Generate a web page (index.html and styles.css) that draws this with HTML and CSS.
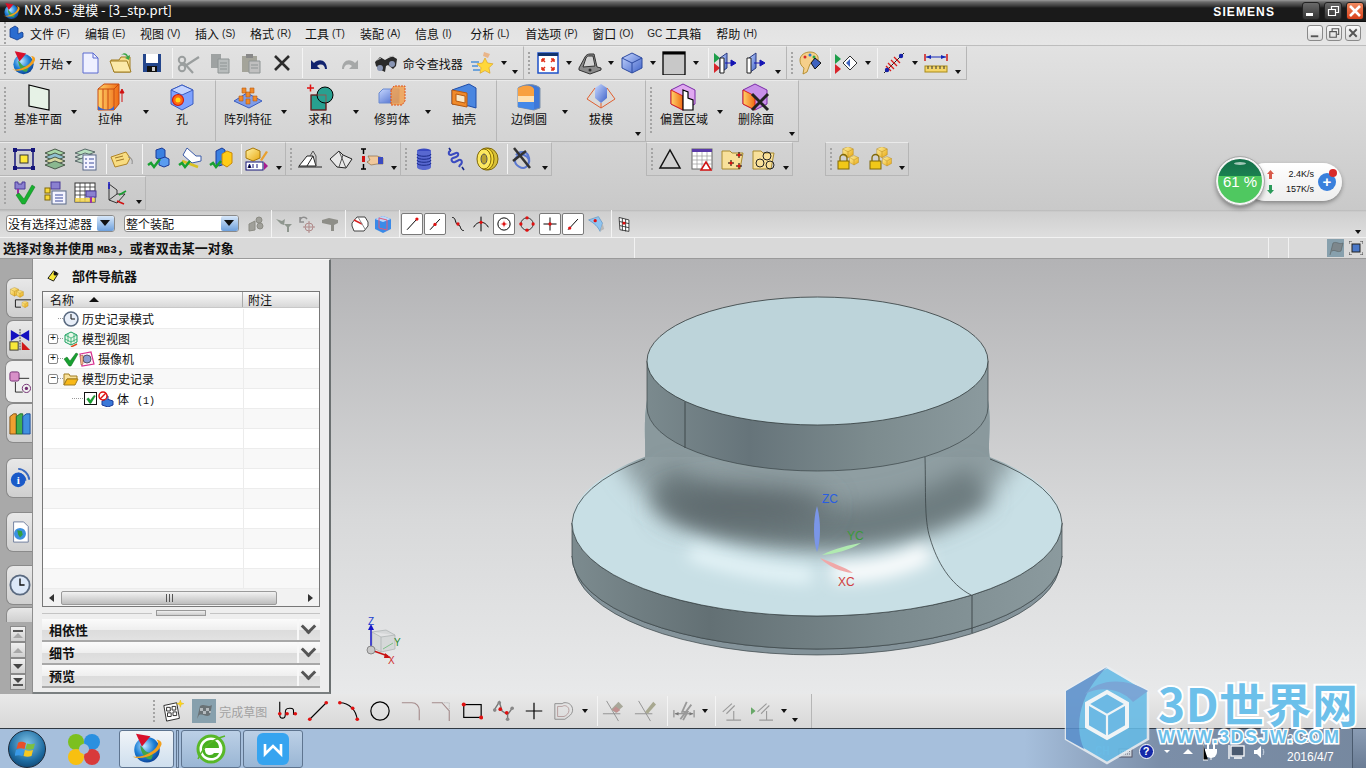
FILE: index.html
```html
<!DOCTYPE html>
<html lang="zh-CN">
<head>
<meta charset="utf-8">
<title>NX 8.5 - 建模 - [3_stp.prt]</title>
<link rel="stylesheet" href="styles.css">
</head>
<body>
<svg class="defs" width="0" height="0" aria-hidden="true">
  <defs>
    <radialGradient id="gGlobe" cx=".4" cy=".35" r=".7"><stop offset="0" stop-color="#bfe6ff"/><stop offset=".55" stop-color="#1c7fd6"/><stop offset="1" stop-color="#0b3f92"/></radialGradient>
    <linearGradient id="gBlue" x1="0" y1="0" x2="1" y2="1"><stop offset="0" stop-color="#c8d8ff"/><stop offset="1" stop-color="#3f62c8"/></linearGradient>
    <linearGradient id="gGold" x1="0" y1="0" x2="1" y2="1"><stop offset="0" stop-color="#fff3a8"/><stop offset="1" stop-color="#e8a810"/></linearGradient>
    <linearGradient id="gOrange" x1="0" y1="0" x2="1" y2="0"><stop offset="0" stop-color="#ffd36a"/><stop offset="1" stop-color="#ef6a14"/></linearGradient>
    <linearGradient id="gBand" x1="0" y1="0" x2="1" y2="0"><stop offset="0" stop-color="#7b8a8e"/><stop offset=".3" stop-color="#66747a"/><stop offset=".65" stop-color="#7c8b8e"/><stop offset="1" stop-color="#8b9a9e"/></linearGradient>
    <linearGradient id="gBase" x1="0" y1="0" x2="1" y2="0"><stop offset="0" stop-color="#7c8b8f"/><stop offset=".28" stop-color="#637074"/><stop offset=".65" stop-color="#7b8a8e"/><stop offset="1" stop-color="#8b9a9e"/></linearGradient>
    <symbol id="nx" viewBox="0 0 40 40"><circle cx="20" cy="21" r="15" fill="url(#gGlobe)"/><path d="M12 16c4 2 5 8 10 8s6 3 3 8c-6 2-12-6-13-16z" fill="#3fa34d"/><path d="M3 29c10 5 30-2 34-14 1-4-3-6-6-6 4 3 2 8-4 13-8 6-17 8-24 7z" fill="#f2a01e"/><path d="M7 2l17 3-10 12z" fill="#d8102a"/></symbol>
    <symbol id="chk" viewBox="0 0 16 16"><path d="M1 8l3-2 3 4 6-8 2 1-7 12h-2z" fill="#18a030" stroke="#0a6a1a" stroke-width=".5"/></symbol>
    <symbol id="cube" viewBox="0 0 24 24"><path d="M12 2l10 5v10l-10 5-10-5V7z" fill="url(#gBlue)" stroke="#2d4aa0"/><path d="M2 7l10 5 10-5M12 12v10" fill="none" stroke="#2d4aa0"/></symbol>
    <symbol id="cubo" viewBox="0 0 24 24"><path d="M12 1l9 4v10l-9 5-9-5V5z" fill="url(#gGold)" stroke="#a87808" stroke-width=".7"/><path d="M3 5l9 5 9-5M12 10v10" fill="none" stroke="#a87808" stroke-width=".7"/></symbol>
    <symbol id="linept" viewBox="0 0 22 22"><path d="M5 18L17 5" stroke="#000" stroke-width="1.200"/></symbol>
  </defs>
</svg>

<div class="app">
  <header class="titlebar">
    <svg class="tlogo"><use href="#nx"/></svg>
    <span class="ttext">NX 8.5 - 建模 - [3_stp.prt]</span>
    <span class="siemens">SIEMENS</span>
    <div class="wbtns">
      <span class="wb"><svg width="18" height="18" viewBox="0 0 18 18"><rect x="4" y="11" width="7" height="3" fill="#fff"/></svg></span>
      <span class="wb"><svg width="18" height="18" viewBox="0 0 18 18"><path d="M4.500 7.500h7v6h-7zM7.500 7V4.500h7v6H12" fill="none" stroke="#fff" stroke-width="1.200"/></svg></span>
      <span class="wb wclose"><svg width="18" height="18" viewBox="0 0 18 18"><path d="M4 4l10 10M14 4L4 14" stroke="#fff" stroke-width="2.600"/></svg></span>
    </div>
  </header>

  <nav class="menubar">
    <i class="grip"></i>
    <svg class="mlogo" viewBox="0 0 16 16"><path d="M2 4l5-3 3 2v6l4-2 1 1v4l-6 3-2-1-5-2z" fill="#2a6cd0" stroke="#123a8a" stroke-width=".8"/></svg>
    <span class="m">文件<b>(F)</b></span><span class="m">编辑<b>(E)</b></span><span class="m">视图<b>(V)</b></span><span class="m">插入<b>(S)</b></span><span class="m">格式<b>(R)</b></span><span class="m">工具<b>(T)</b></span><span class="m">装配<b>(A)</b></span><span class="m">信息<b>(I)</b></span><span class="m">分析<b>(L)</b></span><span class="m">首选项<b>(P)</b></span><span class="m">窗口<b>(O)</b></span><span class="m"><b class="gc">GC</b>工具箱</span><span class="m">帮助<b>(H)</b></span>
    <div class="mdi">
      <span class="mb"><svg width="15" height="15" viewBox="0 0 15 15"><rect x="3" y="10" width="8" height="2" fill="#555"/></svg></span>
      <span class="mb"><svg width="15" height="15" viewBox="0 0 15 15"><path d="M3 6h7v6H3zM5.500 5.500V3h7v6H11" fill="none" stroke="#555" stroke-width="1.200"/></svg></span>
      <span class="mb"><svg width="15" height="15" viewBox="0 0 15 15"><path d="M3.500 3.500l8 8M11.500 3.500l-8 8" stroke="#555" stroke-width="2"/></svg></span>
    </div>
  </nav>

  <section class="tools">
    <div class="row">
      <div class="g pr">
        <i class="grip"></i>
        <span class="b"><svg class="ic ic28"><use href="#nx"/></svg></span>
        <span class="lb lstart">开始<i class="c"></i></span>
        <span class="b"><svg class="ic" viewBox="0 0 24 24"><path d="M5 2h10l5 5v15H5z" fill="#eef0ff" stroke="#5a6ad0"/><path d="M15 2v5h5" fill="none" stroke="#5a6ad0"/></svg></span>
        <span class="b"><svg class="ic" viewBox="0 0 24 24"><path d="M2 9h8l2-3h9v15H5z" fill="#f7dc8a" stroke="#a07c20"/><path d="M5 21L1 10h17l4 11z" fill="#fbe9a8" stroke="#a07c20"/><path d="M12 4c3-3 6-2 7 1l2-1-1 5-4-2 2-1c-1-2-3-3-6-2z" fill="#3aa648"/></svg></span>
        <span class="b"><svg class="ic" viewBox="0 0 24 24"><path d="M3 3h18v18H3z" fill="#24468c"/><rect x="6" y="3" width="12" height="9" fill="#fff"/><rect x="7" y="15" width="10" height="6" fill="#111"/><rect x="12" y="16" width="3" height="4" fill="#ccc"/></svg></span>
        <i class="sep"></i>
        <span class="b"><svg class="ic" viewBox="0 0 24 24"><path d="M8 15L22 6M7 12l9 10" stroke="#9a9e9e" stroke-width="2.200" fill="none"/><circle cx="5" cy="9" r="3.200" fill="none" stroke="#9a9e9e" stroke-width="2"/><circle cx="5" cy="17" r="3.200" fill="none" stroke="#9a9e9e" stroke-width="2"/></svg></span>
        <span class="b"><svg class="ic" viewBox="0 0 24 24"><path d="M3 3h10v14H3z" fill="#9ea2a2"/><path d="M10 8h11v14H10z" fill="#b8bcbc" stroke="#8e9494"/><path d="M12 12h7M12 15h7M12 18h7" stroke="#8e9494"/></svg></span>
        <span class="b"><svg class="ic" viewBox="0 0 24 24"><path d="M3 5h15v16H3z" fill="#a4a49a"/><path d="M7 3h7v4H7z" fill="#888"/><path d="M10 10h11v12H10z" fill="#c0c0c0" stroke="#8e9494"/><path d="M12 14h7M12 17h7" stroke="#8e9494"/></svg></span>
        <span class="b"><svg class="ic" viewBox="0 0 24 24"><path d="M5 5l14 14M19 5L5 19" stroke="#2c2c2c" stroke-width="2.600"/></svg></span>
        <i class="sep"></i>
        <span class="b"><svg class="ic" viewBox="0 0 24 24"><path d="M20 18c0-9-8-11-13-6l-3-3v9h9l-3-3c4-3 8-1 8 3z" fill="#12246e"/></svg></span>
        <span class="b"><svg class="ic" viewBox="0 0 24 24"><path d="M4 18c0-9 8-11 13-6l3-3v9h-9l3-3c-4-3-8-1-8 3z" fill="#a6a8a8"/></svg></span>
        <i class="sep"></i>
        <span class="b"><svg class="ic" viewBox="0 0 24 24"><path d="M1 11L6 6l5 3 7-4 5 3-1 7-3 3-5-4-2 1-1 6-6-3-3-3z" fill="#2a2a2a"/><circle cx="6" cy="17" r="3" fill="#8a96b4"/><circle cx="18" cy="13" r="3" fill="#8a96b4"/><path d="M3 9l4-2M15 6l5-1" stroke="#bbb"/></svg></span>
        <span class="lb lfind">命令查找器</span>
        <span class="b"><svg class="ic" viewBox="0 0 24 24"><path d="M15 7l2.500 5 5.500.8-4 4 1 5.500-5-2.700-5 2.700 1-5.500-4-4 5.500-.8z" fill="#ffd83a" stroke="#d89a10" stroke-width=".6"/><path d="M1 11h8M2 15h6M3 19h7" stroke="#4a90d8" stroke-width="1.500"/><path d="M14 1l6 2-2 4-5-2z" fill="#e9b58a"/></svg></span>
        <i class="cb"><i class="c"></i></i>
        <i class="mini"><i class="c"></i></i>
      </div>
      <div class="g pr">
        <i class="grip"></i>
        <span class="b"><svg class="ic" viewBox="0 0 24 24"><rect x="2" y="2" width="20" height="20" fill="#fff" stroke="#1e50c8" stroke-width="1.500"/><rect x="2" y="2" width="20" height="3" fill="#12336e"/><path d="M6 8l3 3M18 8l-3 3M6 19l3-3M18 19l-3-3M6 8h3M6 8v3M18 8h-3M18 8v3M6 19h3M6 19v-3M18 19h-3M18 19v-3" stroke="#e0301a" stroke-width="1.500"/></svg></span>
        <i class="cb"><i class="c"></i></i>
        <span class="b"><svg class="ic" viewBox="0 0 24 24"><path d="M1 17L7 6c1-2 3-3 5-3h4l3 13 4 1v2l-11 4-11-4z" fill="#8a8a8a" stroke="#333"/><path d="M8 7c1-2 2-2 4-2h3l2 10-12 1z" fill="#d4d4d4" stroke="#333"/><circle cx="12" cy="19" r="1.500" fill="#333"/></svg></span>
        <i class="cb"><i class="c"></i></i>
        <span class="b"><svg class="ic" viewBox="0 0 24 24"><use href="#cube"/></svg></span>
        <i class="cb"><i class="c"></i></i>
        <span class="b"><svg class="ic" viewBox="0 0 24 24"><rect x="1" y="1" width="22" height="23" fill="#c8c8c8" stroke="#000" stroke-width="1.300"/><rect x="1" y="1" width="22" height="2.500" fill="#000"/></svg></span>
        <i class="cb"><i class="c"></i></i>
        <i class="sep sepw"></i>
        <span class="b"><svg class="ic" viewBox="0 0 24 24"><path d="M1 12l6 5-6 5z" fill="#d8242a"/><path d="M1 2l6 5-6 5z" fill="#1e9e4a"/><path d="M7 7l7-5v15l-7 5z" fill="url(#gBlue)" stroke="#2a3a80"/><path d="M7 7h4v15H7z" fill="#fff" stroke="#222"/><path d="M12 12h8M18 9l5 3-5 3z" stroke="#1414b4" fill="#1414b4"/></svg></span>
        <span class="b"><svg class="ic" viewBox="0 0 24 24"><path d="M5 7l7-5v15l-7 5z" fill="url(#gBlue)" stroke="#2a3a80"/><path d="M3 7h4v15H3z" fill="#fff" stroke="#222"/><path d="M10 12h8M16 9l5 3-5 3z" stroke="#1414b4" fill="#1414b4"/></svg></span>
        <i class="mini"><i class="c"></i></i>
      </div>
      <div class="g pr">
        <i class="grip"></i>
        <span class="b"><svg class="ic" viewBox="0 0 24 24"><path d="M2 9c0-5 5-8 10-8 6 0 9 4 8 8-2 3-6 2-8 4l-3 8-4 2 1-6C3 15 2 12 2 9z" fill="#f5cf8a" stroke="#a98018" stroke-width=".8"/><circle cx="7" cy="6" r="1.500" fill="#d82a2a"/><circle cx="12" cy="4" r="1.500" fill="#2a78d8"/><circle cx="16" cy="6" r="1.500" fill="#2aa848"/><path d="M13 12l4-5 6 5-6 6z" fill="#3e62c0" stroke="#111"/></svg></span>
        <i class="sep"></i>
        <span class="b"><svg class="ic" viewBox="0 0 24 24"><path d="M1 3l6 5-6 5z" fill="#1e9e4a"/><path d="M1 13l6 5-6 5z" fill="#d8242a"/><path d="M9 12l7-7 7 7-7 7z" fill="#fff" stroke="#333"/><path d="M12 12l4-4v8z" fill="#3e62c0"/></svg></span>
        <i class="cb"><i class="c"></i></i>
        <i class="sep"></i>
        <span class="b"><svg class="ic" viewBox="0 0 24 24"><path d="M2 22L22 2" stroke="#222"/><path d="M6 12l6 6M9 9l6 6M12 6l6 6M4 15l5 5" stroke="#d81a1a" stroke-width="1.300"/><circle cx="5" cy="19" r="2.200" fill="#1420a8"/><circle cx="19" cy="5" r="2.200" fill="#1420a8"/></svg></span>
        <i class="cb"><i class="c"></i></i>
        <span class="b"><svg class="ic" viewBox="0 0 24 24"><path d="M1 3v7M23 3v7" stroke="#d01818" stroke-width="1.500"/><path d="M2 6h20" stroke="#1428b8"/><path d="M2 6l5-2v4zM22 6l-5-2v4z" fill="#1428b8"/><rect x="1" y="15" width="22" height="6" fill="#f5d668" stroke="#a88a18"/><path d="M4 15v3M8 15v3M12 15v3M16 15v3M20 15v3" stroke="#333"/></svg></span>
        <i class="mini"><i class="c"></i></i>
      </div>
    </div>

    <div class="row rowbig">
      <div class="g gbig pb3">
        <i class="grip"></i>
        <span class="big"><svg class="ib" viewBox="0 0 30 30"><path d="M6 3l20 5v20L6 24z" fill="#e6f2e6" stroke="#000" stroke-width="1.200"/></svg><em>基准平面</em></span><i class="cc"><i class="c"></i></i>
        <span class="big"><svg class="ib" viewBox="0 0 30 30"><path d="M3 7l6-5h15v20l-5 6H3z" fill="url(#gOrange)" stroke="#c84a10"/><path d="M3 7h16v21M19 7l5-5M8 7v21M13 7v21" fill="none" stroke="#c84a10"/><path d="M3 24c6 5 12 5 16 0v4H3z" fill="#3c64c8"/><path d="M27 20V8M25 11l2-4 2 4z" stroke="#d01010" fill="#d01010"/></svg><em>拉伸</em></span><i class="cc"><i class="c"></i></i>
        <span class="big"><svg class="ib" viewBox="0 0 30 30"><path d="M15 3l11 5v14l-11 6-11-6V8z" fill="#7ea2ff" stroke="#3a5cc0"/><path d="M4 8l11 5 11-5-11-5z" fill="#c4d4ff" stroke="#3a5cc0"/><circle cx="11" cy="18" r="5.500" fill="#ff6a10" stroke="#d01818" stroke-width="1.200"/><circle cx="11" cy="18" r="2.500" fill="#ffd818"/></svg><em>孔</em></span>
      </div>
      <div class="g gbig pb2">
        <i class="sep2"></i>
        <span class="big"><svg class="ib" viewBox="0 0 30 30"><path d="M1 19l13-8 15 8-13 7z" fill="#7e9ce8" stroke="#3a5cc0"/><path d="M6 14h4v5H6zM13 10h4v5h-4zM20 14h4v5h-4zM13 17h4v5h-4zM9 6h4v5H9zM17 6h4v5h-4z" fill="#f08a2a" stroke="#b85a10" stroke-width=".6"/></svg><em>阵列特征</em></span><i class="cc"><i class="c"></i></i>
        <span class="big"><svg class="ib" viewBox="0 0 30 30"><rect x="6" y="13" width="15" height="15" fill="#28a090" stroke="#000"/><circle cx="20" cy="13" r="8" fill="#28a090" stroke="#000"/><rect x="6" y="13" width="15" height="15" fill="none" stroke="#d02a2a" stroke-width=".6"/><path d="M2 6h7M5.500 2.500v7" stroke="#e01010" stroke-width="1.500"/></svg><em>求和</em></span><i class="cc"><i class="c"></i></i>
        <span class="big"><svg class="ib" viewBox="0 0 30 30"><path d="M2 11l4-4h16v14H2z" fill="url(#gBlue)" stroke="#6a8ad0"/><path d="M14 8l3-4h11v15l-3 4H14z" fill="#f0a050" fill-opacity=".85" stroke="#e05018" stroke-dasharray="2 1"/></svg><em>修剪体</em></span><i class="cc"><i class="c"></i></i>
        <span class="big"><svg class="ib" viewBox="0 0 30 30"><path d="M3 8l17-6 7 4v20l-7-2-17-2z" fill="#4a86e0" stroke="#1e4ca8"/><path d="M3 8l15 3v14L3 22z" fill="#f08a2a" stroke="#b85a10"/><path d="M7 12l9 2v7l-9-2z" fill="#f8e8c8" stroke="#b85a10"/></svg><em>抽壳</em></span>
      </div>
      <div class="g gbig">
        <i class="sep2"></i>
        <span class="big"><svg class="ib" viewBox="0 0 30 30"><path d="M4 6c8-5 18-4 22 0v20l-6 2-16-3z" fill="#3f78d8" stroke="#7c90a8"/><path d="M4 6c8-4 14-3 16 1v7H4z" fill="#f8a040"/><path d="M4 14h16v6H4z" fill="#ffe0b0"/><path d="M4 20h16v8L4 25z" fill="#4488e8"/></svg><em>边倒圆</em></span><i class="cc"><i class="c"></i></i>
        <span class="big"><svg class="ib" viewBox="0 0 30 30"><path d="M15 2l6 4v10l-6 5-6-5V6z" fill="url(#gBlue)"/><path d="M9 6l-8 11 14 9 14-9-8-11" fill="none" stroke="#e06030"/><path d="M15 26V21" stroke="#e06030"/></svg><em>拔模</em></span>
        <i class="mini minib"><i class="c"></i></i>
      </div>
      <div class="g gbig">
        <i class="grip"></i>
        <span class="big"><svg class="ib" viewBox="0 0 30 30"><path d="M14 2l12 6v14l-12 6-12-6V8z" fill="#e0a8f0" stroke="#7a2aa8"/><path d="M2 8l12 6v14L2 22z" fill="url(#gOrange)" stroke="#d82020"/><path d="M14 8l5 2v6l5 2v10H14z" fill="#fff" stroke="#000" stroke-width="1.200"/></svg><em>偏置区域</em></span><i class="cc"><i class="c"></i></i>
        <span class="big"><svg class="ib" viewBox="0 0 30 30"><path d="M14 2l12 6v14l-12 6-12-6V8z" fill="#c890e8" stroke="#7a2aa8"/><path d="M2 8l12 6v14L2 22z" fill="url(#gOrange)" stroke="#d82020"/><path d="M11 12l16 16M27 12L11 28" stroke="#222" stroke-width="3"/></svg><em>删除面</em></span>
        <i class="mini minib minic"><i class="c"></i></i>
      </div>
    </div>

    <div class="row">
      <div class="g">
        <i class="grip"></i>
        <span class="b"><svg class="ic" viewBox="0 0 24 24"><path d="M3 3h18v18H3z" fill="none" stroke="#14147a" stroke-width="1.500"/><rect x="1" y="1" width="4" height="4" fill="#14147a"/><rect x="19" y="1" width="4" height="4" fill="#14147a"/><rect x="1" y="19" width="4" height="4" fill="#14147a"/><rect x="19" y="19" width="4" height="4" fill="#14147a"/><rect x="8" y="8" width="8" height="8" fill="#ffe838" stroke="#333"/></svg></span>
        <span class="b"><svg class="ic" viewBox="0 0 24 24"><path d="M12 2l10 4-10 4L2 6z" fill="#a8d8a8" stroke="#4a5a4a"/><path d="M12 6l10 4-10 4-10-4z" fill="#90c0d0" stroke="#4a5a4a"/><path d="M12 10l10 4-10 4-10-4z" fill="#d8d8a0" stroke="#4a5a4a"/><path d="M12 14l10 4-10 4-10-4z" fill="#8ab890" stroke="#4a5a4a"/></svg></span>
        <span class="b"><svg class="ic" viewBox="0 0 24 24"><path d="M11 2l10 3-10 4L1 6z" fill="#b8e0c0" stroke="#5a6a6a"/><path d="M11 6l10 3-10 4L1 10z" fill="#d0e8d8" stroke="#5a6a6a"/><path d="M11 10l10 3-10 4L1 14z" fill="#c0d8c8" stroke="#5a6a6a"/><rect x="9" y="8" width="13" height="15" fill="#f4f4ff" stroke="#5a6a8a"/><path d="M11 12h2M15 12h5M11 16h2M15 16h5M11 20h2M15 20h5" stroke="#3a4a9a"/></svg></span>
        <i class="sep"></i>
        <span class="b"><svg class="ic" viewBox="0 0 24 24"><path d="M1 10l15-5 4 6-3 6-12 3z" fill="#f8dc80" stroke="#b08428"/><path d="M5 11l8-2M6 14l8-2" stroke="#a07828"/><path d="M18 10c3 0 5 3 4 7" fill="none" stroke="#888"/></svg></span>
        <i class="sep"></i>
        <span class="b"><svg class="ic" viewBox="0 0 24 24"><path d="M9 3l6-2 3 2v8l-4 2-5-2z" fill="#3a80e0" stroke="#1a3a98"/><path d="M12 12l6-2 4 2v6l-5 2-5-2z" fill="#5a9cf0" stroke="#1a3a98"/><path d="M1 18l3-2 3 4 6-8" fill="none" stroke="#18a030" stroke-width="2.500"/></svg></span>
        <span class="b"><svg class="ic" viewBox="0 0 24 24"><path d="M9 1l9 8h5v5l-9 2-9-8z" fill="#fff" stroke="#3a5aa8"/><path d="M4 14l16 6" stroke="#d8c020" stroke-width="2.500"/><path d="M1 18l3-2 3 4 5-6" fill="none" stroke="#18a030" stroke-width="2.500"/></svg></span>
        <span class="b"><svg class="ic" viewBox="0 0 24 24"><path d="M7 4l6-3 3 2v14l-6 2-3-2z" fill="#3a80e0" stroke="#1a3a98"/><path d="M13 7l5-3 5 2v10l-5 4-5-3z" fill="#ffcc18" stroke="#c88808"/><path d="M1 18l3-2 3 4 5-6" fill="none" stroke="#18a030" stroke-width="2.500"/></svg></span>
        <i class="sep"></i>
        <span class="b"><svg class="ic" viewBox="0 0 24 24"><path d="M8 1l7 3v7l-7 3-7-3V4z" fill="url(#gGold)" stroke="#a87808"/><rect x="1" y="15" width="17" height="8" fill="#fff" stroke="#141478"/><path d="M3 21l1.500-4 1.500 4M8 17v4M12 17v4" stroke="#141478"/><path d="M19 15l4 4-4 4z" fill="#a81a90"/><path d="M15 13l6-9 2 1-6 9z" fill="#e8a030"/></svg></span>
        <i class="mini"><i class="c"></i></i>
      </div>
      <div class="g">
        <i class="grip"></i>
        <span class="b"><svg class="ic" viewBox="0 0 24 24"><path d="M1 19l8-10h6l-6 10zM15 9l3 10H9" fill="#fff" stroke="#222"/><path d="M12 9l3-5 3 5v10" fill="none" stroke="#555"/><path d="M0 20h24" stroke="#222"/></svg></span>
        <span class="b"><svg class="ic" viewBox="0 0 24 24"><path d="M1 12l9-8 4 4 9 4-6 9-9-1z" fill="#e8e8e8" stroke="#222"/><path d="M10 4l7 17M14 8l-4 12" fill="none" stroke="#555"/></svg></span>
        <span class="b"><svg class="ic" viewBox="0 0 24 24"><path d="M1 2h5M3.500 2v5M1 22h5M3.500 17v5" stroke="#000" stroke-width="1.500"/><path d="M3.500 9v6" stroke="#d01010" stroke-width="3"/><path d="M9 9h8l6 2v6h-6l-6 1-4-3 3-2-2-4z" fill="#f0c89c" stroke="#806038" stroke-width=".6"/><rect x="18" y="10" width="5" height="7" fill="#3a4ac0"/></svg></span>
        <i class="mini"><i class="c"></i></i>
      </div>
      <div class="g">
        <i class="grip"></i>
        <span class="b"><svg class="ic" viewBox="0 0 24 24"><ellipse cx="12" cy="4" rx="7" ry="2.500" fill="#3a4ac0"/><path d="M5 4v16c0 4 14 4 14 0V4" fill="#5868d0"/><path d="M5 7c0 3 14 3 14 0M5 10c0 3 14 3 14 0M5 13c0 3 14 3 14 0M5 16c0 3 14 3 14 0" fill="none" stroke="#1a2a88"/></svg></span>
        <span class="b"><svg class="ic" viewBox="0 0 24 24"><path d="M5 1l2 3M20 23l-2-3" stroke="#1a2a88" stroke-width="1.600"/><path d="M7 4c-3 0-3 4 0 4l5-2c3-1 3 3 0 4l-3 1c-3 1-1 5 2 4l4-2c3-1 4 3 1 5l-1 2" fill="none" stroke="#3a4ac0" stroke-width="2"/></svg></span>
        <span class="b"><svg class="ic" viewBox="0 0 24 24"><ellipse cx="13" cy="12" rx="10" ry="11" fill="#d8c038" stroke="#806808"/><ellipse cx="11" cy="12" rx="8" ry="11" fill="#f8dc38" stroke="#806808"/><ellipse cx="9" cy="12" rx="7" ry="10" fill="#fce860" stroke="#806808"/><ellipse cx="9" cy="12" rx="3" ry="5" fill="#b8a030" stroke="#555"/></svg></span>
        <i class="sep"></i>
        <span class="b"><svg class="ic" viewBox="0 0 24 24"><path d="M5 8c3-4 10-4 12 0s2 9-2 12-11-2-11-6 4-8 9-6 6 6 4 9" fill="none" stroke="#5a78d0" stroke-width="2"/><path d="M3 1l16 20" stroke="#333" stroke-width="2.500"/><path d="M2 14L15 4" stroke="#333" stroke-width="2.500"/></svg></span>
        <i class="mini"><i class="c"></i></i>
      </div>
      <div class="g gm94">
        <i class="grip"></i>
        <span class="b"><svg class="ic" viewBox="0 0 24 24"><path d="M12 3L2 21h20z" fill="none" stroke="#111" stroke-width="1.500"/></svg></span>
        <span class="b"><svg class="ic" viewBox="0 0 24 24"><rect x="2" y="2" width="20" height="20" fill="#fff" stroke="#666"/><rect x="2" y="2" width="20" height="3" fill="#5a3aa8"/><path d="M2 9h20M2 13h20M2 17h20M7 5v17M12 5v17M17 5v17" stroke="#999" stroke-width=".7"/><path d="M16 15l5 8H11z" fill="#fff" stroke="#d01010" stroke-width="1.500"/></svg></span>
        <span class="b"><svg class="ic" viewBox="0 0 24 24"><path d="M1 22V4h8l2 2h11l-3 16z" fill="#f8e09a" stroke="#a88a30"/><path d="M7 16h6M10 13v6M15 8h6M18 5v6M15 19h6M18 16v6" stroke="#000"/><circle cx="10" cy="16" r="1.500" fill="#e01010"/><circle cx="18" cy="8" r="1.500" fill="#e01010"/><circle cx="18" cy="19" r="1.500" fill="#e01010"/></svg></span>
        <span class="b"><svg class="ic" viewBox="0 0 24 24"><path d="M1 22V4h8l2 2h11l-3 16z" fill="#f8e09a" stroke="#a88a30"/><circle cx="15" cy="9" r="4" fill="none" stroke="#222"/><circle cx="8" cy="16" r="4" fill="none" stroke="#222"/><circle cx="18" cy="18" r="4" fill="none" stroke="#222"/></svg></span>
        <i class="mini"><i class="c"></i></i>
      </div>
      <div class="g gm32">
        <i class="grip"></i>
        <span class="b"><svg class="ic" viewBox="0 0 24 24"><use href="#cubo" x="4" y="-1" width="14" height="14"/><use href="#cubo" x="11" y="8" width="12" height="12"/><rect x="1" y="14" width="11" height="8" fill="#f0c818" stroke="#806808"/><path d="M3 14v-3a3.500 3.500 0 0 1 7 0v3" fill="none" stroke="#806808" stroke-width="1.300"/></svg></span>
        <span class="b"><svg class="ic" viewBox="0 0 24 24"><use href="#cubo" x="6" y="-1" width="14" height="14"/><use href="#cubo" x="12" y="9" width="12" height="12"/><rect x="1" y="14" width="11" height="8" fill="#f0c818" stroke="#806808"/><path d="M3 14v-3a3.500 3.500 0 0 1 7 0v3" fill="none" stroke="#806808" stroke-width="1.300"/></svg></span>
        <i class="mini"><i class="c"></i></i>
      </div>
    </div>

    <div class="row">
      <div class="g">
        <i class="grip"></i>
        <span class="b"><svg class="ic" viewBox="0 0 24 24"><path d="M3 1h3v2h4V1h3v7H3z" fill="#8a80d0" stroke="#4a3a98"/><path d="M6 8v5" stroke="#a030a0" stroke-width="2"/><path d="M4 14l3-2 5 6 8-14 3 2-10 17h-3z" fill="#18b030" stroke="#0a7a1a" stroke-width=".5"/></svg></span>
        <span class="b"><svg class="ic" viewBox="0 0 24 24"><rect x="8" y="1" width="9" height="7" fill="#8a80d0" stroke="#4a3a98"/><rect x="2" y="7" width="5" height="5" fill="#f8d838" stroke="#806808"/><rect x="2" y="14" width="5" height="5" fill="#f8d838" stroke="#806808"/><rect x="9" y="10" width="14" height="13" fill="#f4f4ff" stroke="#5a6a8a"/><path d="M12 14h8M12 17h8M12 20h8" stroke="#3a4a9a"/></svg></span>
        <span class="b"><svg class="ic" viewBox="0 0 24 24"><rect x="1" y="2" width="20" height="19" fill="#fff" stroke="#333"/><path d="M1 6h20M1 10h20M1 14h20M6 2v19M11 2v19M16 2v19" stroke="#333" stroke-width=".8"/><path d="M1 17h20v4H1z" fill="#f0d040" opacity=".8"/><rect x="12" y="10" width="10" height="6" fill="#8a80d0" stroke="#4a3a98"/><path d="M17 16v6" stroke="#a030a0" stroke-width="2"/></svg></span>
        <span class="b"><svg class="ic" viewBox="0 0 24 24"><path d="M4 3v16l8-6V9zM4 19l8 3 8-9-8 0" fill="none" stroke="#333"/><path d="M4 8V1" stroke="#1414c8" stroke-width="1.500"/><path d="M14 14l7-4" stroke="#18a030" stroke-width="1.500"/><path d="M12 20l7 3" stroke="#d01010" stroke-width="1.500"/></svg></span>
        <i class="mini"><i class="c"></i></i>
      </div>
    </div>

    <div class="widget">
      <div class="pill">
        <span class="rate"><i class="up"><svg width="7" height="9" viewBox="0 0 7 9"><path d="M3.500 0L7 4H5v5H2V4H0z" fill="#d85a4a"/></svg></i><u>2.4K/s</u></span>
        <span class="rate"><i class="dn"><svg width="7" height="9" viewBox="0 0 7 9"><path d="M3.500 9L7 5H5V0H2v5H0z" fill="#2a9a5a"/></svg></i><u>157K/s</u></span>
        <span class="plus">+<i class="dot"></i></span>
      </div>
      <div class="ball"><span>61 %</span></div>
    </div>
  </section>

  <div class="selbar">
    <span class="sel sel1">没有选择过滤器<i class="drop"></i></span>
    <span class="sel sel2">整个装配<i class="drop"></i></span>
    <span class="s sgap"><svg class="is" viewBox="0 0 18 18"><path d="M2 9l6-3v9l-6 1zM9 5a3 3 0 1 1 6 0 3 3 0 1 1-6 0M10 11a3 3 0 1 1 6 0 3 3 0 1 1-6 0" fill="#a0a09a" stroke="#8c8c84"/></svg></span>
    <i class="sep"></i>
    <span class="s"><svg class="is" viewBox="0 0 18 18"><path d="M1 4l6 2 3-2-1 6-3-1zM9 9h8l-3 3v5h-2v-5z" fill="#8e968e"/></svg></span>
    <span class="s"><svg class="is" viewBox="0 0 18 18"><path d="M2 6c0-4 5-5 7-2M2 2v5h4" fill="none" stroke="#8e8e8e" stroke-width="1.500"/><circle cx="11" cy="12" r="4" fill="none" stroke="#b08a8a"/><path d="M11 6v12M5 12h12" stroke="#b08a8a"/></svg></span>
    <span class="s"><svg class="is" viewBox="0 0 18 18"><path d="M1 5l7-2 9 2v3l-4 2v6h-3v-6L1 8z" fill="#8e8e88"/></svg></span>
    <i class="sep"></i>
    <span class="s sgap2"><svg class="is" viewBox="0 0 18 18"><path d="M1 8l5-6h8l3 5v4l-4 5H3l-2-5z" fill="#fff" stroke="#444"/><path d="M3 5l8 4" stroke="#d82020" stroke-width="1.500"/><path d="M7 2l7 12" stroke="#888"/></svg></span>
    <span class="s"><svg class="is" viewBox="0 0 18 18"><path d="M9 1l8 3v10l-8 4-8-4V4z" fill="#3a8ae8"/><path d="M1 4l8 3 8-3-8-3z" fill="#bcd8f8"/><path d="M5 3v10l8 2V5z" fill="none" stroke="#e05a7a"/></svg></span>
    <i class="sep sep6"></i>
    <span class="s"><span class="box"><svg class="is" viewBox="0 0 22 22"><use href="#linept"/><circle cx="17" cy="5" r="2" fill="#e01010"/></svg></span></span>
    <span class="s"><span class="box"><svg class="is" viewBox="0 0 22 22"><use href="#linept"/><circle cx="11" cy="11.500" r="2" fill="#e01010"/></svg></span></span>
    <span class="s"><svg class="is" viewBox="0 0 22 22"><path d="M4 3c5 0 3 8 7 9 4 0 2 7 7 7" fill="none" stroke="#000" stroke-width="1.200"/><circle cx="11" cy="11" r="2" fill="#e01010"/></svg></span>
    <span class="s"><svg class="is" viewBox="0 0 22 22"><path d="M2 15c3-5 6-6 9-6s6 1 9 6M11 2v18" fill="none" stroke="#000" stroke-width="1.200"/><circle cx="11" cy="9" r="2" fill="#e01010"/></svg></span>
    <span class="s"><span class="box"><svg class="is" viewBox="0 0 22 22"><circle cx="11" cy="11" r="7.500" fill="none" stroke="#000" stroke-width="1.200"/><circle cx="11" cy="11" r="2" fill="#e01010"/><path d="M7 11h8M11 7v8" stroke="#e01010" stroke-width=".6"/></svg></span></span>
    <span class="s"><svg class="is" viewBox="0 0 22 22"><circle cx="11" cy="11" r="7.500" fill="none" stroke="#333" stroke-width="1.200"/><circle cx="11" cy="3.500" r="2" fill="#e01010"/><circle cx="11" cy="18.500" r="2" fill="#e01010"/><circle cx="3.500" cy="11" r="2" fill="#e01010"/><circle cx="18.500" cy="11" r="2" fill="#e01010"/></svg></span>
    <span class="s"><span class="box"><svg class="is" viewBox="0 0 22 22"><path d="M3 11h16M11 3v16" stroke="#000" stroke-width="1.200"/><circle cx="11" cy="11" r="2" fill="#e01010"/></svg></span></span>
    <span class="s"><span class="box"><svg class="is" viewBox="0 0 22 22"><use href="#linept"/><circle cx="7" cy="16" r="2" fill="#e01010"/></svg></span></span>
    <span class="s"><svg class="is" viewBox="0 0 22 22"><path d="M2 6l12-4 5 8-3 10c-3-6-6-9-14-14z" fill="#8ec4f0" stroke="#6a9ac8"/><path d="M16 20l5-3-2-7z" fill="#b8b8b8"/><circle cx="10" cy="7" r="2" fill="#e01010"/></svg></span>
    <i class="sep"></i>
    <span class="s"><svg class="is" viewBox="0 0 22 22"><path d="M5 3l12 3v14L6 18z" fill="#fff" stroke="#222"/><path d="M5.500 8l11.500 2.500M6 13l11 2.500M9 4v15M13 5v15" stroke="#222"/><circle cx="11" cy="10" r="1.800" fill="#e01010"/></svg></span>
    <i class="mini mend"><i class="c"></i></i>
  </div>

  <div class="status">
    <strong class="prompt">选择对象并使用 <tt>MB3</tt>，或者双击某一对象</strong>
    <i class="div"></i><i class="div d2"></i><i class="div d3"></i>
    <span class="flagbox"><svg width="16" height="16" viewBox="0 0 16 16"><path d="M2 15L5 3c4-2 6 2 10 0l-2 8c-4 2-6-2-9 0" fill="#7d878c" stroke="#5e686c" stroke-width=".7"/></svg></span>
    <span class="fsbtn"><svg width="14" height="14" viewBox="0 0 14 14"><path d="M0 3V0h3M11 0h3v3M14 11v3h-3M3 14H0v-3" fill="none" stroke="#444"/><rect x="3" y="3" width="8" height="8" fill="#4a78c8" stroke="#222"/></svg></span>
  </div>

  <main class="main">
    <aside class="tabs">
      <span class="tab"><svg class="it" viewBox="0 0 24 24"><use href="#cubo" x="0" y="0" width="12" height="12"/><use href="#cubo" x="7" y="3" width="10" height="10"/><path d="M7 14v8h6M7 14h17" fill="none" stroke="#111"/><use href="#cubo" x="13" y="15" width="9" height="9"/></svg></span>
      <span class="tab tnb"><svg class="it" viewBox="0 0 24 24"><path d="M2 1l10 6 10-6v12l-10-6-10 6z" fill="#1410c0"/><path d="M12 0v24" stroke="#333" stroke-dasharray="2 1"/><rect x="1" y="14" width="9" height="9" fill="#f8e838" stroke="#333"/><path d="M14 14l9 9h-9z" fill="#d01818"/></svg></span>
      <span class="tab act"><svg class="it" viewBox="0 0 24 24"><rect x="1" y="1" width="10" height="10" rx="2" fill="#d890c8" stroke="#702a70"/><path d="M11 8h11M7 12v11h8" fill="none" stroke="#222"/><circle cx="19" cy="19" r="4.500" fill="none" stroke="#702a70"/><circle cx="19" cy="19" r="1.800" fill="#702a70"/></svg></span>
      <span class="tab"><svg class="it" viewBox="0 0 24 24"><path d="M1 5l4-3h3v22H1z" fill="#f0a030" stroke="#805010"/><path d="M8 5l4-3h3v22H8z" fill="#40b050" stroke="#1a6a2a"/><path d="M15 5l4-3h4v22h-8z" fill="#4090e0" stroke="#1a4a98"/></svg></span>
      <span class="tab tabgap"><svg class="it" viewBox="0 0 24 24"><path d="M10 2c6 0 12 6 12 12M10 7c4 0 8 4 8 8" fill="none" stroke="#3a6ac0" stroke-width="2"/><circle cx="10" cy="14" r="8" fill="#1a5ac8"/><text x="10" y="18" class="itxt">i</text></svg></span>
      <span class="tab tabgap2"><svg class="it" viewBox="0 0 24 24"><path d="M5 1h11l5 5v17H5z" fill="#fff" stroke="#6a7a9a"/><circle cx="12" cy="14" r="6.500" fill="#3a90e0"/><path d="M9 10l5 1 1 4-3 3-2-3z" fill="#30a040"/></svg></span>
      <span class="tab tabgap3"><svg class="it" viewBox="0 0 24 24"><circle cx="12" cy="12" r="10.500" fill="#dce8f8" stroke="#5a6a80" stroke-width="2"/><path d="M12 5v7h5" fill="none" stroke="#111" stroke-width="1.500"/></svg></span>
      <span class="tab tabclip"></span>
      <div class="scrolls">
        <span class="sb"><i class="bar"></i><i class="tu tg"></i></span>
        <span class="sb"><i class="tu tg"></i></span>
        <span class="sb"><i class="td"></i></span>
        <span class="sb"><i class="td"></i><i class="bar"></i></span>
      </div>
    </aside>
    <section class="panel">
      <div class="phead"><svg class="pi" viewBox="0 0 14 14"><path d="M1 10l6-8 5 3-5 8z" fill="#f8e838" stroke="#111"/><circle cx="9" cy="5" r="2" fill="#111"/></svg>部件导航器</div>
      <div class="tree">
        <div class="thead"><span class="th1">名称<i class="sortup"></i></span><span class="th2">附注</span></div>
        <div class="vline"></div>
        <div class="tr"><span class="tc"><i class="tw none"></i><i class="dots"></i><svg class="tk" viewBox="0 0 16 16"><circle cx="8" cy="8" r="7" fill="#e8eef8" stroke="#5a6a80" stroke-width="1.600"/><path d="M8 3v5h4" fill="none" stroke="#111"/></svg><span class="tl">历史记录模式</span></span></div>
        <div class="tr alt"><span class="tc"><i class="tw">+</i><i class="dots"></i><svg class="tk" viewBox="0 0 16 16"><path d="M8 1l6 3v7l-6 3-6-3V4z" fill="#e8f8e8" stroke="#18a060"/><path d="M2 4l6 3 6-3M8 7v7M2 8l6 3 6-3M5 3v8M11 3v8" fill="none" stroke="#18a060" stroke-width=".7"/><path d="M8 16l6-3" stroke="#e05020" stroke-width="1.500"/></svg><span class="tl">模型视图</span></span></div>
        <div class="tr"><span class="tc"><i class="tw">+</i><i class="dots"></i><svg class="tk" viewBox="0 0 16 16"><use href="#chk"/></svg><svg class="tk" viewBox="0 0 16 16"><path d="M1 3l11-2 3 12-12 2z" fill="#fff0f8" stroke="#d83090" stroke-width="1.200"/><circle cx="8" cy="8" r="4" fill="#8a9ad0" stroke="#556"/><path d="M1 5l3-1v9l-2 1z" fill="#f8b890" stroke="#905030" stroke-width=".5"/></svg><span class="tl">摄像机</span></span></div>
        <div class="tr alt"><span class="tc"><i class="tw">−</i><i class="dots"></i><svg class="tk" viewBox="0 0 16 16"><path d="M1 14V3h5l1 2h7v3H4z" fill="#f8e09a" stroke="#a07c20"/><path d="M1 14l3-6h11l-3 6z" fill="#f8b818" stroke="#a07c20"/></svg><span class="tl">模型历史记录</span></span></div>
        <div class="tr"><span class="tc tc5"><i class="dots dl"></i><span class="cbx"><svg width="10" height="10" viewBox="0 0 16 16"><use href="#chk"/></svg></span><svg class="tk" viewBox="0 0 16 16"><path d="M4 10l5-2 6 2v4l-5 2-6-2z" fill="#3a78d8" stroke="#1a3a98"/><path d="M5 9V5h5v3" fill="#8ab0f0" stroke="#1a3a98"/><circle cx="5" cy="5" r="4" fill="#fff" stroke="#e01010" stroke-width="1.500"/><path d="M2 8l6-6" stroke="#e01010" stroke-width="1.500"/></svg><span class="tl tl5">体<small>(1)</small></span></span></div>
        <div class="tr alt"></div><div class="tr"></div><div class="tr alt"></div><div class="tr"></div><div class="tr alt"></div><div class="tr"></div><div class="tr alt"></div><div class="tr"></div><div class="tr alt"></div>
        <div class="hscroll"><i class="al"></i><span class="thumb"><i class="ticks"></i></span><i class="ar"></i></div>
      </div>
      <div class="split"><i></i><span></span><i></i></div>
      <div class="acc"><strong>相依性</strong><span class="chev"></span></div>
      <div class="acc"><strong>细节</strong><span class="chev"></span></div>
      <div class="acc"><strong>预览</strong><span class="chev"></span></div>
    </section>
    <div class="view">
      <svg class="scene" viewBox="331 259 1035 435" width="1035" height="435">
        <defs>
          <filter id="b8" x="-50%" y="-300%" width="200%" height="700%"><feGaussianBlur stdDeviation="8"/></filter>
          <filter id="b11" x="-50%" y="-100%" width="200%" height="300%"><feGaussianBlur stdDeviation="11"/></filter>
          <filter id="b14" x="-50%" y="-100%" width="200%" height="300%"><feGaussianBlur stdDeviation="14"/></filter>
          <clipPath id="body"><path d="M647 400C643 425 646 445 645 459L990 459C987 445 992 425 988 400Z"/><ellipse cx="817" cy="523" rx="245" ry="93"/></clipPath>
        </defs>
        <path d="M572 556A245 93 0 0 0 1062 556L1060 562A243 93 0 0 1 574 562Z" fill="#84939a" stroke="#3a4446" stroke-width=".7"/>
        <path d="M572 523A245 93 0 0 0 1062 523L1062 556A245 93 0 0 1 572 556Z" fill="url(#gBase)" stroke="#3a4446" stroke-width=".7"/>
        <g clip-path="url(#body)">
          <rect x="560" y="390" width="520" height="240" fill="#c8dfe5"/>
          <ellipse cx="817" cy="445" rx="200" ry="95" fill="#8f9ea2" filter="url(#b11)"/>
          <rect x="640" y="395" width="355" height="62" fill="#8a999d"/>
          <path d="M660 484Q730 526 817 528Q915 528 980 484" fill="none" stroke="#6d7b7f" stroke-width="42" filter="url(#b11)"/>
          <ellipse cx="745" cy="507" rx="85" ry="20" fill="#5f6b6e" filter="url(#b14)"/>
          <path d="M832 573Q890 573 928 552" fill="none" stroke="#fff" stroke-width="18" filter="url(#b8)"/>
          <path d="M690 552Q745 572 812 576" fill="none" stroke="#eaf8fb" stroke-width="14" filter="url(#b8)"/>
        </g>
        <path d="M645 459A245 93 0 0 0 572 523A245 93 0 0 0 1062 523A245 93 0 0 0 990 459" fill="none" stroke="#3a4446" stroke-width=".8"/>
        <path d="M925 457C926 490 924 520 930 538C937 562 950 584 971 595" fill="none" stroke="#3a4446" stroke-width=".8"/>
        <path d="M972 595V633" stroke="#3a4446" stroke-width=".9"/>
        <path d="M647 361V407A170.500 64 0 0 0 988 407V361Z" fill="url(#gBand)" stroke="#3a4446" stroke-width=".7"/>
        <path d="M685 402V448" stroke="#3a4446" stroke-width=".9"/>
        <ellipse cx="817.500" cy="361" rx="170.500" ry="64" fill="#bdd4da" stroke="#30383a" stroke-width=".8"/>
        <path d="M817 506C821 520 821 540 817 552C813 540 813 520 817 506Z" fill="#7a96e8"/>
        <path d="M822 555C835 548 850 545 861 543C850 550 835 554 822 555Z" fill="#b0eab0"/>
        <path d="M820 558C832 563 845 567 853 573C840 572 828 566 820 558Z" fill="#f0a8a8"/>
        <text x="822" y="503" class="lz">ZC</text><text x="847" y="540" class="ly">YC</text><text x="838" y="586" class="lx">XC</text>
        <path d="M372 632l14-2 9 5v14l-14 3-9-5zM372 632l9 5 14-2M381 637v15" fill="#c8cccc" fill-opacity=".5" stroke="#aab0b0" stroke-width=".7"/>
        <path d="M383 649l10-6" stroke="#7fc08a"/>
        <path d="M371 650V627" stroke="#1414c8" stroke-width="1.500"/><path d="M368 630l3-6 3 6z" fill="#1414c8"/>
        <path d="M371 650l17 6" stroke="#c81414" stroke-width="1.500"/><path d="M385 653l6 5-7 0z" fill="#c81414"/>
        <circle cx="371" cy="650" r="4" fill="#c8c8c8" stroke="#888"/>
        <text x="368" y="625" class="tz">Z</text><text x="394" y="646" class="ty">Y</text><text x="388" y="664" class="tx">X</text>
      </svg>
    </div>
  </main>

  <div class="sketch">
    <div class="g sg">
      <i class="grip"></i>
      <span class="b"><svg class="ic" viewBox="0 0 24 24"><path d="M2 6l14-3 3 17-14 3z" fill="#fff" stroke="#222"/><path d="M5 8h4v4H5zM11 7h4v4h-4zM6 14h4v4H6zM12 13h4v4h-4z" fill="none" stroke="#222"/><path d="M20 0l1 3 3 1-3 1-1 3-1-3-3-1 3-1z" fill="#ffd818" stroke="#d8a808" stroke-width=".4"/></svg></span>
      <span class="fin"><span class="finico"><svg width="20" height="20" viewBox="0 0 20 20"><path d="M3 18L6 5c5-3 7 2 12-1l-2 10c-4 3-7-2-11 0" fill="#6a7276"/><path d="M6 7h3v3H6zM12 7h3v3h-3zM9 10h3v3H9zM15 10h2v2h-2z" fill="#b4babe"/></svg></span>完成草图</span>
      <span class="n nfirst"><svg class="ic" viewBox="0 0 24 24"><path d="M3 2v14c0 5 6 5 6 0s0-7 5-7 4 2 4 7" fill="none" stroke="#000" stroke-width="1.200"/><circle cx="3" cy="15" r="2" fill="#e01010"/><circle cx="11" cy="15" r="2" fill="#e01010"/><circle cx="20" cy="15" r="2" fill="#e01010"/></svg></span>
      <span class="n"><svg class="ic" viewBox="0 0 24 24"><path d="M3 21L21 3" stroke="#000" stroke-width="1.200"/><circle cx="3" cy="21" r="2" fill="#e01010"/><circle cx="21" cy="3" r="2" fill="#e01010"/></svg></span>
      <span class="n"><svg class="ic" viewBox="0 0 24 24"><path d="M2 3c10 0 18 8 19 19" fill="none" stroke="#000" stroke-width="1.200"/><circle cx="2" cy="3" r="2" fill="#e01010"/><circle cx="16" cy="9" r="2" fill="#e01010"/><circle cx="21" cy="21" r="2" fill="#e01010"/></svg></span>
      <span class="n"><svg class="ic" viewBox="0 0 24 24"><circle cx="12" cy="12" r="10" fill="none" stroke="#000" stroke-width="1.300"/></svg></span>
      <span class="n"><svg class="ic" viewBox="0 0 24 24"><path d="M2 3h11c5 0 8 4 8 8v11" fill="none" stroke="#a48a8a" stroke-width="1.200"/></svg></span>
      <span class="n"><svg class="ic" viewBox="0 0 24 24"><path d="M2 3h11l8 9v11" fill="none" stroke="#a48a8a" stroke-width="1.200"/><path d="M13 3h8v9" fill="none" stroke="#aaa" stroke-dasharray="1 1"/></svg></span>
      <span class="n"><svg class="ic" viewBox="0 0 24 24"><rect x="3" y="5" width="19" height="14" fill="none" stroke="#000" stroke-width="1.300"/><circle cx="3" cy="5" r="2.200" fill="#e01010"/><circle cx="22" cy="19" r="2.200" fill="#e01010"/></svg></span>
      <span class="n"><svg class="ic" viewBox="0 0 24 24"><path d="M3 10L8 2l3 10 6 4 5-7M11 12l-3-10M17 16v5" fill="none" stroke="#777" stroke-width="1.500"/><circle cx="8" cy="3" r="2" fill="#888"/><circle cx="3" cy="11" r="2" fill="#888"/><circle cx="22" cy="9" r="2" fill="#888"/><circle cx="17" cy="21" r="2" fill="#888"/><circle cx="9" cy="10" r="2" fill="#e01010"/><circle cx="16" cy="14" r="2" fill="#e01010"/></svg></span>
      <span class="n"><svg class="ic" viewBox="0 0 24 24"><path d="M3 12h18M12 3v18" stroke="#000" stroke-width="1.300"/></svg></span>
      <span class="n"><svg class="ic" viewBox="0 0 24 24"><path d="M2 4h8c2-2 7-1 9 1 3 3 4 9-2 13l-4 3H2z" fill="none" stroke="#8a8a8a"/><path d="M5 7h5c3-2 6 0 7 2 1 3 0 6-3 8l-2 1H5z" fill="none" stroke="#b49a9a"/></svg></span>
      <i class="cb"><i class="c"></i></i>
      <i class="sep sepb"></i>
      <span class="b"><svg class="ic" viewBox="0 0 24 24"><path d="M5 1l13 22M1 15h19" stroke="#8e8e8e"/><path d="M10 10l8-8 5 5-8 7z" fill="#a8a89a"/><path d="M15 7l5 4-4 3-5-3z" fill="#c09090"/></svg></span>
      <span class="b"><svg class="ic" viewBox="0 0 24 24"><path d="M5 1l13 22M1 15h19" stroke="#8e8e8e"/><path d="M12 13l9-11 3 3-9 10z" fill="#a8a890"/></svg></span>
      <i class="sep sepc"></i>
      <span class="b"><svg class="ic" viewBox="0 0 24 24"><path d="M1 11v8M23 11v8M2 15h20" stroke="#777"/><path d="M2 15l4-2v4zM22 15l-4-2v4z" fill="#777"/><path d="M8 21L20 5M15 2l-5 11h6l-5 9" fill="none" stroke="#999" stroke-width="2"/></svg></span>
      <i class="cb"><i class="c"></i></i>
      <i class="sep"></i>
      <span class="b"><svg class="ic" viewBox="0 0 24 24"><path d="M3 13L13 4M7 15l9-9" stroke="#9a9a9a" stroke-width="1.200"/><path d="M15 12v10M7 22h16" stroke="#9a9a9a" stroke-width="1.200"/></svg></span>
      <span class="b"><svg class="ic" viewBox="0 0 24 24"><path d="M0 8l5 4-5 4z" fill="#68a868"/><path d="M7 13L17 4M11 15l9-9" stroke="#9a9a9a" stroke-width="1.200"/><path d="M17 12v10M9 22h15" stroke="#9a9a9a" stroke-width="1.200"/></svg></span>
      <i class="cb"><i class="c"></i></i>
      <i class="mini"><i class="c"></i></i>
    </div>
  </div>

  <footer class="taskbar">
    <span class="orb"><svg width="24" height="24" viewBox="0 0 24 24"><path d="M3 6c3-2 5-1 8 0l-1.500 6c-3-1-5-1-8 0z" fill="#e8502a"/><path d="M12 6.500c3 1 5 1 8 0L18.500 12c-3 1-5 1-8 0z" fill="#7cc040"/><path d="M1 13c3-1 5-1 8 0l-1.500 6c-3-1-5-1-8 0z" fill="#3a9ae8"/><path d="M10 13c3 1 5 1 8 0l-1.500 6c-3 1-5 1-8 0z" fill="#f8c820"/></svg></span>
    <span class="app4"><svg width="36" height="36" viewBox="0 0 36 36"><circle cx="10" cy="11" r="8" fill="#7cc020"/><circle cx="26" cy="11" r="8" fill="#2a90e0"/><circle cx="26" cy="26" r="8" fill="#d83a3a"/><circle cx="10" cy="26" r="8" fill="#f8c010"/><circle cx="18" cy="18" r="5" fill="#a6bfda"/></svg></span>
    <span class="tb tbact"><svg width="34" height="34"><use href="#nx"/></svg></span>
    <i class="tsep"></i>
    <span class="tb tb1"><svg width="32" height="32" viewBox="0 0 32 32"><circle cx="16" cy="16" r="13" fill="#fff" stroke="#58b828" stroke-width="3"/><path d="M8 15h16c0-5-3-8-8-8s-9 4-9 9 4 9 9 9c4 0 7-2 8-5h-5c-1 1-2 2-4 2-3 0-5-2-5-5" fill="#48b020"/><path d="M3 26C8 14 18 6 30 3" fill="none" stroke="#58b828" stroke-width="1.500"/></svg></span>
    <span class="tb tb2"><svg width="32" height="32" viewBox="0 0 32 32"><rect width="32" height="32" rx="6" fill="#36a4f0"/><path d="M8 11v10l8-8 8 8V11" fill="none" stroke="#fff" stroke-width="2.600"/></svg></span>
    <div class="tray">
      <span class="t t23 ch">CH</span>
      <span class="t t22"><svg width="15" height="12" viewBox="0 0 15 12"><rect x="1" y="3" width="13" height="8" fill="#cdd4dc" stroke="#556"/><path d="M3 5.500h9M3 8h9" stroke="#667" stroke-dasharray="1 1"/></svg></span>
      <span class="t t20"><span class="help">?</span></span>
      <span class="t t22"><i class="trdn"></i></span>
      <span class="t t20"><i class="trup"></i></span>
      <span class="t t27"><svg width="17" height="18" viewBox="0 0 17 18"><path d="M5 1v5M11 1v5" stroke="#fff" stroke-width="2"/><path d="M2 6h12v3a6 6 0 0 1-12 0z" fill="#fff"/><path d="M8 14v3M0 1v16h5" stroke="#fff"/></svg></span>
      <span class="t t24"><svg width="18" height="16" viewBox="0 0 18 16"><rect x="3" y="2" width="13" height="10" fill="#4a5a70" stroke="#fff" stroke-width="1.300"/><path d="M6 14h8M1 1v14" stroke="#fff" stroke-width="1.300"/></svg></span>
      <span class="t t22"><svg width="14" height="14" viewBox="0 0 14 14"><path d="M1 5h3l4-4v12L4 9H1z" fill="#fff"/><path d="M10 4c1 2 1 4 0 6" fill="none" stroke="#cfd8e4"/></svg></span>
      <span class="clock"><u>20:39</u><u>2016/4/7</u></span>
      <span class="desk"></span>
    </div>
  </footer>

  <div class="mark">
    <svg class="hex" width="88" height="102" viewBox="0 0 88 102"><g opacity=".88"><path d="M44 3l41 24v48L44 99 3 75V27z" fill="#66bbe6" stroke="#e9eef2" stroke-width="2.500"/><path d="M44 3L3 27v48l18 10C10 60 18 28 44 3z" fill="#5a90cc"/><path d="M85 27C60 12 34 16 22 30c14-8 36-6 48 8z" fill="#6c9dd4"/></g><path d="M44 28l20 11.500v23L44 74 24 62.500v-23z" fill="#6cb9e4" stroke="#f0f4f6" stroke-width="4"/><path d="M24 39.500L44 51l20-11.500M44 51v23" fill="none" stroke="#f0f4f6" stroke-width="2.200"/></svg>
    <div class="marktext">
      <span class="m1">3D世界网</span>
      <span class="m2">WWW.3DSJW.COM</span>
    </div>
  </div>
</div>
</body>
</html>
```

FILE: styles.css
```css
* { box-sizing: border-box; }
html, body { margin: 0; padding: 0; height: 100%; overflow: hidden; }
body { font: 12px "Noto Sans CJK SC", "Liberation Sans", sans-serif; color: #111; background: #ccc; }
i, em, u, b { font-style: normal; text-decoration: none; font-weight: normal; }
svg { display: block; flex: none; }
.defs { position: absolute; }
.app { position: relative; width: 1366px; height: 768px; display: flex; flex-direction: column; overflow: hidden; }

/* title bar */
.titlebar { height: 22px; display: flex; align-items: center; background: linear-gradient(#9a9a9a 0, #6a6a6a 2px, #3a3a3a 6px, #1a1a1a 8px, #1a1a1a 21px, #000 22px); color: #fff; }
.tlogo { width: 19px; height: 19px; margin-left: 2px; }
.ttext { margin-left: 3px; font-size: 13px; line-height: 20px; margin-top: -2px; }
.siemens { margin-left: auto; font: bold 12px "Liberation Sans", sans-serif; letter-spacing: 1.100px; padding-top: 1px; }
.wbtns { display: flex; gap: 4px; margin: 0 2px 0 27px; align-self: flex-start; padding-top: 2px; }
.wb { width: 18px; height: 18px; border-radius: 3px; background: linear-gradient(#6a6a6a, #333); border: 1px solid #222; display: block; }
.wb svg { margin: -1px; }
.wclose { background: linear-gradient(#f08a60, #d8401a); }

/* menu */
.menubar { height: 24px; display: flex; align-items: center; background: linear-gradient(#e2e2e2, #e6e6e6); border-bottom: 1px solid #bdbdbd; padding-bottom: 1px; }
.mlogo { width: 16px; height: 16px; margin: 0 6px 0 0; }
.m { margin-right: 15px; font-size: 12px; white-space: nowrap; display: flex; align-items: center; }
.m b { font: 10px "Liberation Sans", sans-serif; margin-left: 3px; width: 13px; color: #222; white-space: nowrap; }
.m .gc { margin: 0 5px 0 0; width: 13px; }
.mdi { margin-left: auto; margin-right: 5px; display: flex; gap: 3px; }
.mb { width: 16px; height: 16px; border: 1px solid #8a8a8a; border-radius: 3px; background: linear-gradient(#fafafa, #dcdcdc); }
.mb svg { width: 14px; height: 14px; }

/* toolbars */
.grip { width: 2px; height: 22px; margin: 0 2px 0 4px; flex: none; background: repeating-linear-gradient(#a4a4a4 0 2px, transparent 2px 4px); }
.tools { position: relative; background: linear-gradient(#e2e2e2, #c9c9c9); }
.row { height: 34px; display: flex; align-items: stretch; }
.rowbig { height: 62px; }
.g { display: flex; align-items: center; position: relative; border-right: 1px solid #b6b6b6; border-bottom: 1px solid #b6b6b6; border-top: 1px solid #eaeaea; }
.pr { padding-right: 2px; }
.pb3 { padding-right: 3px; }
.pb2 { padding-right: 2px; }
.gm94 { margin-left: 94px; border-left: 1px solid #b6b6b6; }
.gm32 { margin-left: 32px; border-left: 1px solid #b6b6b6; }
.b { width: 31.250px; height: 30px; display: flex; align-items: center; justify-content: center; flex: none; }
.ic { width: 24px; height: 24px; }
.ic28 { width: 27px; height: 27px; }
.sep { width: 5px; height: 30px; flex: none; border-right: 1px solid #f4f4f4; }
.sepw { width: 8px; }
.sep6 { width: 6px; }
.sepb { width: 7px; }
.sepc { width: 8px; }
.lb { font-size: 12px; display: flex; align-items: center; flex: none; }
.lstart { width: 35px; gap: 3px; }
.lfind { width: 65px; padding: 0 4px 0 1px; }
.c { display: block; width: 0; height: 0; border-left: 3.500px solid transparent; border-right: 3.500px solid transparent; border-top: 4px solid #111; flex: none; }
.cb { width: 11px; display: flex; justify-content: center; flex: none; }
.mini { width: 12px; height: 30px; display: flex; align-items: flex-end; justify-content: center; padding-bottom: 4px; flex: none; }
.gbig { align-items: stretch; }
.gbig > .grip { align-self: center; height: 48px; }
.sep2 { width: 2px; flex: none; }
.big { width: 60px; display: flex; flex-direction: column; align-items: center; padding-top: 1px; flex: none; }
.ib { width: 30px; height: 30px; }
.big em { font-size: 12px; margin-top: -2px; font-style: normal; white-space: nowrap; line-height: 18px; }
.cc { width: 12px; display: flex; justify-content: center; padding-top: 29px; flex: none; }
.minib { height: auto; align-self: stretch; width: 14px; padding-bottom: 5px; }
.minic { width: 12px; }

/* network widget */
.widget { position: absolute; left: 1216px; top: 111px; width: 128px; height: 52px; }
.pill { position: absolute; left: 30px; top: 6px; width: 96px; height: 38px; border-radius: 19px; background: linear-gradient(#fff, #eee); box-shadow: 0 2px 4px rgba(0,0,0,.35); }
.rate { position: absolute; left: 21px; display: flex; width: 47px; font: 9px "Liberation Sans", sans-serif; justify-content: space-between; align-items: center; }
.rate:first-child { top: 6px; }
.rate:nth-child(2) { top: 21px; }
.rate u { color: #111; }
.plus { position: absolute; left: 72px; top: 10px; width: 18px; height: 18px; border-radius: 50%; background: #3a80dc; color: #fff; font: bold 15px/18px "Liberation Sans", sans-serif; text-align: center; }
.dot { position: absolute; left: 11px; top: -4px; width: 8px; height: 8px; border-radius: 50%; background: #d82a2a; }
.ball { position: absolute; left: 0; top: 0; width: 48px; height: 48px; border-radius: 50%; border: 2px solid #f4f4f4; outline: 1px solid #aaa; background: linear-gradient(#146f4a 0, #1a8050 38%, #4fc860 38%, #4fc860 100%); box-shadow: 0 3px 5px rgba(0,0,0,.4); display: flex; align-items: center; justify-content: center; color: #fff; font: 15px "Liberation Sans", sans-serif; }
.ball::before { content: ""; position: absolute; left: 16px; top: 3px; width: 12px; height: 3px; border-radius: 50%; background: rgba(255,255,255,.6); }

/* selection bar */
.selbar { height: 28px; display: flex; align-items: center; padding-left: 6px; background: linear-gradient(#b9b9b9 0, #cfcfcf 2px, #dedede 100%); border-bottom: 1px solid #f2f2f2; }
.sel { height: 17px; background: #fff; border: 1px solid #8a8a8a; border-radius: 3px; position: relative; font-size: 12px; line-height: 15px; padding-left: 1px; display: block; flex: none; white-space: nowrap; }
.sel1 { width: 109px; }
.sel2 { width: 115px; margin-left: 9px; }
.drop { position: absolute; right: 0; top: 0; width: 17px; height: 15px; border-radius: 2px; background: linear-gradient(#d8e8fa, #6ea0dc); display: block; }
.drop::after { content: ""; position: absolute; left: 3px; top: 4px; border-left: 5px solid transparent; border-right: 5px solid transparent; border-top: 6px solid #111; }
.s { width: 23px; height: 24px; display: flex; align-items: center; justify-content: center; flex: none; }
.sgap { margin-left: 5px; }
.sgap2 { margin-left: 2px; }
.is { width: 18px; height: 18px; }
.box { width: 22px; height: 22px; background: #fff; border: 1px solid #7a7a7a; border-radius: 2px; display: flex; align-items: center; justify-content: center; }
.mend { margin-left: auto; margin-right: 2px; width: 12px; height: 24px; padding-bottom: 2px; }

/* status */
.status { height: 21px; display: flex; align-items: center; background: #d9d9d9; border-bottom: 1px solid #9a9a9a; padding: 0 0 1px 3px; }
.prompt { font-size: 13px; font-weight: bold; white-space: nowrap; width: 631px; flex: none; }
.prompt tt { font: bold 11px "Liberation Mono", monospace; }
.div { width: 1px; height: 20px; background: #f2f2f2; flex: none; }
.d2 { margin-left: 633px; }
.d3 { margin-left: 19px; }
.flagbox { margin-left: 38px; width: 17px; height: 18px; background: #87a0ad; display: flex; align-items: center; justify-content: center; }
.fsbtn { margin-left: 5px; }

/* main */
.main { flex: 1; display: flex; min-height: 0; }
.tabs { width: 33px; flex: none; background: #a9a9a9; padding: 19px 0 0 6px; display: flex; flex-direction: column; overflow: hidden; position: relative; border-right: 1px solid #8e8e8e; }
.tab { width: 27px; height: 40px; margin-bottom: 2px; flex: none; background: linear-gradient(#e8e8e8, #cfcfcf); border: 1px solid #8a8a8a; border-right: 0; border-radius: 7px 0 0 7px; display: flex; align-items: center; justify-content: center; }
.tnb { margin-bottom: 0; }
.tab.act { width: 28px; height: 43px; margin: 0 0 0 -1px; background: #efefef; position: relative; z-index: 1; }
.tabgap { margin-top: 13px; }
.tabgap2 { margin-top: 12px; }
.tabgap3 { margin-top: 11px; }
.tabclip { height: 15px; border-radius: 7px 0 0 0; border-bottom: 0; }
.it { width: 22px; height: 24px; }
.itxt { font: bold 12px "Liberation Serif", serif; fill: #fff; text-anchor: middle; }
.scrolls { display: flex; flex-direction: column; margin: 2px 0 0 4px; }
.sb { width: 16px; height: 16px; background: linear-gradient(#f0f0f0, #d0d0d0); border: 1px solid #8a8a8a; display: flex; flex-direction: column; align-items: center; justify-content: center; gap: 1px; }
.bar { width: 10px; height: 1.500px; background: #555; }
.tu { width: 0; height: 0; border-left: 5px solid transparent; border-right: 5px solid transparent; border-bottom: 5px solid #555; }
.tg { border-bottom-color: #a8a8a8; }
.td { width: 0; height: 0; border-left: 5px solid transparent; border-right: 5px solid transparent; border-top: 5px solid #444; }

.panel { width: 298px; flex: none; background: #eeeeee; border-right: 2px solid #6b7071; border-top: 1px solid #f8f8f8; border-bottom: 2px solid #7a7f80; padding: 0 9px; display: flex; flex-direction: column; }
.phead { height: 31px; display: flex; align-items: center; font-size: 13px; font-weight: bold; padding-left: 5px; }
.pi { width: 13px; height: 13px; margin-right: 12px; }
.tree { width: 278px; height: 316px; border: 1px solid #777; background: #fff; position: relative; display: flex; flex-direction: column; flex: none; }
.thead { height: 16px; display: flex; background: linear-gradient(#fafafa, #d8d8d8); border-bottom: 1px solid #c8c8c8; margin-bottom: 1px; flex: none; }
.th1 { width: 200px; padding-left: 7px; line-height: 15px; border-right: 1px solid #aaa; position: relative; }
.th2 { padding-left: 5px; line-height: 15px; }
.sortup { position: absolute; left: 46px; top: 5px; border-left: 5px solid transparent; border-right: 5px solid transparent; border-bottom: 5px solid #111; }
.tr { height: 20px; flex: none; border-bottom: 1px solid #ececec; background: #fff; position: relative; display: flex; }
.tr::after { content: ""; position: absolute; left: 200px; top: 0; bottom: 0; width: 1px; background: #ececec; }
.alt { background: #f8f8f8; }
.tc { display: flex; align-items: center; height: 19px; }
.tw { width: 10px; height: 10px; margin-left: 5px; border: 1px solid #888; border-radius: 2px; background: #fff; font: 10px/8px "Liberation Mono", monospace; text-align: center; position: relative; z-index: 1; flex: none; }
.tw.none { border-color: transparent; background: none; }
.dots { width: 5px; height: 1px; background: repeating-linear-gradient(90deg, #999 0 1px, transparent 1px 2px); flex: none; }
.tk { width: 16px; height: 16px; }
.tl { margin-left: 3px; white-space: nowrap; }
.tc5 { padding-left: 29px; }
.dl { width: 12px; }
.cbx { width: 13px; height: 13px; border: 1px solid #111; background: #fff; display: flex; align-items: center; justify-content: center; margin-right: 1px; flex: none; }
.tl5 small { font: 10px "Liberation Mono", monospace; margin-left: 8px; }
.vline { position: absolute; left: 9px; top: 26px; height: 62px; width: 1px; background: repeating-linear-gradient(#999 0 1px, transparent 1px 2px); }
.hscroll { flex: 1; display: flex; align-items: center; background: #f2f2f2; padding: 0 6px; position: relative; }
.al { border-right: 5px solid #333; border-top: 4px solid transparent; border-bottom: 4px solid transparent; margin-right: 7px; }
.ar { border-left: 5px solid #333; border-top: 4px solid transparent; border-bottom: 4px solid transparent; margin-left: 31px; }
.thumb { width: 216px; height: 14px; border: 1px solid #9a9a9a; border-radius: 2px; background: linear-gradient(#f2f2f2, #bdbdbd); display: flex; align-items: center; justify-content: center; }
.ticks { width: 7px; height: 8px; background: repeating-linear-gradient(90deg, #555 0 1px, transparent 1px 3px); }
.split { height: 12px; width: 278px; display: flex; align-items: center; flex: none; }
.split i { flex: 1; height: 1px; background: #c4c4c4; }
.split span { width: 50px; height: 6px; margin: 0 4px; border: 1px solid #999; background: linear-gradient(#eee, #ccc); }
.acc { width: 278px; height: 23px; flex: none; display: flex; align-items: center; padding: 0 0 1px 7px; border-bottom: 2px solid #a8a8a8; background: linear-gradient(#fbfbfb 0, #efefef 50%, #dcdcdc 52%, #e2e2e2 100%); font-size: 13px; position: relative; }
.acc strong { flex: 1; }
.chev { width: 23px; height: 21px; border-left: 2px solid #f8f8f8; position: relative; flex: none; }
.chev::after { content: ""; position: absolute; left: 4px; top: 2px; width: 8px; height: 8px; border-right: 3px solid #555; border-bottom: 3px solid #555; transform: rotate(45deg); }

.view { flex: 1; position: relative; background: linear-gradient(#b3b3b5 0, #d8d9da 60%, #e8e9ea 100%); overflow: hidden; }
.scene { position: absolute; left: 0; top: 0; }
.lz, .ly, .lx { font: 12px "Liberation Sans", sans-serif; }
.lz { fill: #2a5ee0; } .ly { fill: #3a9a3a; } .lx { fill: #d04040; }
.tz, .ty, .tx { font: 10px "Liberation Sans", sans-serif; }
.tz { fill: #2040d0; } .ty { fill: #28882a; } .tx { fill: #d03030; }

/* sketch bar */
.sketch { height: 34px; display: flex; background: linear-gradient(#e9e9e9, #d8d8d8); }
.sg { margin-left: 149px; padding-right: 10px; border-top: 0; border-bottom: 0; }
.fin { display: flex; align-items: center; margin-left: 4px; width: 76px; gap: 3px; color: #a2a2a2; flex: none; white-space: nowrap; }
.finico { width: 24px; height: 24px; background: #87a0ad; display: flex; align-items: center; justify-content: center; flex: none; }
.n { width: 30.750px; height: 30px; display: flex; align-items: center; justify-content: center; flex: none; }
.nfirst { margin-left: 4px; }
.sketch .ic { width: 22px; height: 22px; }

/* taskbar */
.taskbar { height: 40px; display: flex; align-items: center; background: linear-gradient(90deg, #a6bfdc 0, #a6bfdc 75%, #7b8ea8 85%, #76889f 100%); border-top: 1px solid #2f3842; position: relative; }
.orb { width: 38px; height: 38px; margin-left: 8px; border-radius: 50%; background: radial-gradient(circle at 50% 35%, #7fc4e8, #1c6aa0 60%, #0b2f55); border: 1px solid #1c2a3a; display: flex; align-items: center; justify-content: center; flex: none; }
.app4 { margin-left: 20px; flex: none; }
.tb { width: 60px; height: 38px; border: 1px solid #5f7590; border-radius: 3px; background: linear-gradient(#bcd0e6, #9ab6d4); display: flex; align-items: center; justify-content: center; flex: none; }
.tbact { width: 55px; margin-left: 17px; background: linear-gradient(#f0f4f8, #cfdfee); }
.tb1, .tb2 { margin-left: 2px; }
.tsep { width: 3px; height: 38px; margin-left: 2px; border: 1px solid #5f7590; flex: none; }
.tray { margin-left: auto; display: flex; align-items: center; height: 100%; color: #fff; padding-top: 6px; }
.t { display: flex; justify-content: center; align-items: center; flex: none; height: 20px; }
.t20 { width: 20px; } .t22 { width: 22px; } .t23 { width: 23px; } .t24 { width: 24px; } .t27 { width: 27px; }
.ch { font: 12px "Liberation Mono", monospace; color: #8fc4e4; }
.help { width: 15px; height: 15px; border-radius: 50%; background: #1428a8; border: 1px solid #fff; font: bold 11px/13px "Liberation Sans", sans-serif; text-align: center; color: #fff; }
.trdn { border-left: 3px solid transparent; border-right: 3px solid transparent; border-top: 3px solid #fff; }
.trup { border-left: 5px solid transparent; border-right: 5px solid transparent; border-bottom: 5px solid #fff; }
.clock { width: 81px; height: 38px; margin-top: -6px; display: flex; flex-direction: column; align-items: flex-start; padding-left: 16px; font: 12px/18px "Liberation Sans", sans-serif; flex: none; }
.desk { width: 14px; height: 39px; margin-top: -6px; background: linear-gradient(#8a9cb4, #6a7c94); border-left: 1px solid #4a5a6e; flex: none; }

/* watermark */
.mark { position: absolute; left: 1063px; top: 664px; display: flex; }
.marktext { margin-left: 7px; display: flex; flex-direction: column; }
.m1 { font: bold 46px/56px "Noto Sans CJK SC", sans-serif; color: #6cc0ea; -webkit-text-stroke: 4px #fff; paint-order: stroke fill; letter-spacing: .5px; white-space: nowrap; margin-top: 10px; }
.m2 { font: bold 18px/20px "Liberation Sans", sans-serif; color: #6cc0ea; -webkit-text-stroke: 3px #fff; paint-order: stroke fill; letter-spacing: 1.500px; white-space: nowrap; margin-top: -3px; }
```
